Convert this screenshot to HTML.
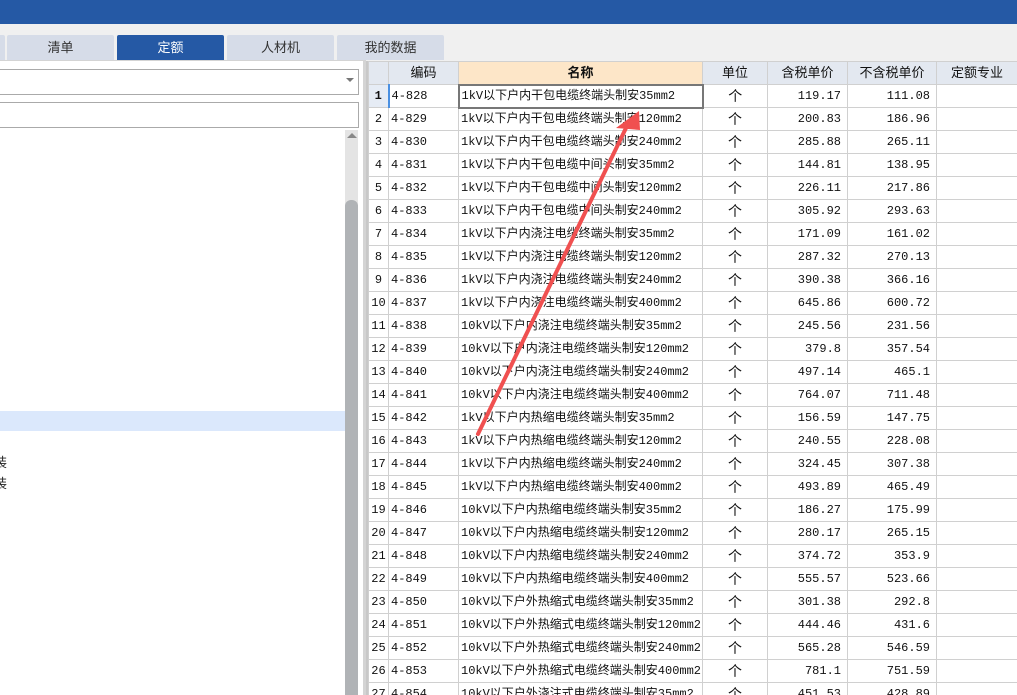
<!DOCTYPE html>
<html><head><meta charset="utf-8">
<style>
*{box-sizing:border-box;margin:0;padding:0}
body{width:1017px;height:695px;overflow:hidden;background:#f0f0f0;font-family:"Liberation Sans","Noto Sans CJK SC",sans-serif;position:relative}
.title{position:absolute;left:0;top:0;width:1017px;height:24px;background:#2559a5}
.tab{position:absolute;top:35px;height:25px;background:#d6dce8;color:#333;font-size:13px;text-align:center;line-height:25px;border-radius:2px 2px 0 0}
.tab.on{background:#2559a5;color:#fff}
.left{position:absolute;left:0;top:60px;width:366px;height:635px;background:#fff;border-right:3px solid #d4d4d4;border-top:1px solid #d4d4d4}
.box{position:absolute;left:-2px;width:361px;height:26px;border:1px solid #aaa;background:#fff}
.sb{position:absolute;left:345px;top:130px;width:13px;height:565px;background:#e4e4e4}
.thumb{position:absolute;left:345px;top:200px;width:13px;height:495px;background:#b0b3b6;border-radius:6px 6px 0 0}
.sel{position:absolute;left:0;top:411px;width:345px;height:20px;background:#dbe8fc}
.grid{position:absolute;left:366px;top:61px;width:651px;height:634px;background:#fff;border-left:2px solid #c8c8c8;overflow:hidden}
table{border-collapse:collapse;table-layout:fixed;width:649px;font-family:"Liberation Mono","Noto Sans CJK SC",monospace;font-size:12px;color:#111}
td,th{border:1px solid #d0d0d0;height:23px;padding:0 2px;white-space:nowrap;overflow:hidden;line-height:14px;vertical-align:middle}
th{background:#e3e8f0;font-weight:normal;font-family:"Liberation Sans","Noto Sans CJK SC",sans-serif;font-size:13px;height:23px}
th.n{background:#fde6c8;font-weight:bold}
td.r{text-align:right;padding-right:6px}
td.c{text-align:center;font-family:"Noto Sans CJK SC",sans-serif;font-size:14px}
td.i{text-align:center;padding:0}
</style></head><body>
<div class="title"></div>
<div class="tab" style="left:-2px;width:7px"></div>
<div class="tab" style="left:7px;width:107px">清单</div>
<div class="tab on" style="left:117px;width:107px">定额</div>
<div class="tab" style="left:227px;width:107px">人材机</div>
<div class="tab" style="left:337px;width:107px">我的数据</div>
<div class="left"></div>
<div class="box" style="top:69px"><span style="position:absolute;right:4px;top:8px;width:0;height:0;border-left:4px solid transparent;border-right:4px solid transparent;border-top:4px solid #777"></span></div>
<div class="box" style="top:102px"></div>
<div class="sel"></div>
<div style="position:absolute;left:-6px;top:452px;font-size:13px;color:#222">装</div>
<div style="position:absolute;left:-6px;top:473px;font-size:13px;color:#222">装</div>
<div class="sb"></div>
<div style="position:absolute;left:347px;top:133px;width:0;height:0;border-left:5px solid transparent;border-right:5px solid transparent;border-bottom:5px solid #888"></div>
<div class="thumb"></div>
<div class="grid">
<table>
<colgroup><col style="width:20px"><col style="width:70px"><col style="width:244px"><col style="width:65px"><col style="width:80px"><col style="width:89px"><col style="width:81px"></colgroup>
<tr><th></th><th>编码</th><th class="n">名称</th><th>单位</th><th>含税单价</th><th>不含税单价</th><th>定额专业</th></tr>
<tr><td class="i" style="background:#e6ecf5;font-weight:bold;border-right:2px solid #4a90e2">1</td><td>4-828</td><td style="border:2px solid #777">1kV以下户内干包电缆终端头制安35mm2</td><td class="c">个</td><td class="r">119.17</td><td class="r">111.08</td><td></td></tr>
<tr><td class="i">2</td><td>4-829</td><td>1kV以下户内干包电缆终端头制安120mm2</td><td class="c">个</td><td class="r">200.83</td><td class="r">186.96</td><td></td></tr>
<tr><td class="i">3</td><td>4-830</td><td>1kV以下户内干包电缆终端头制安240mm2</td><td class="c">个</td><td class="r">285.88</td><td class="r">265.11</td><td></td></tr>
<tr><td class="i">4</td><td>4-831</td><td>1kV以下户内干包电缆中间头制安35mm2</td><td class="c">个</td><td class="r">144.81</td><td class="r">138.95</td><td></td></tr>
<tr><td class="i">5</td><td>4-832</td><td>1kV以下户内干包电缆中间头制安120mm2</td><td class="c">个</td><td class="r">226.11</td><td class="r">217.86</td><td></td></tr>
<tr><td class="i">6</td><td>4-833</td><td>1kV以下户内干包电缆中间头制安240mm2</td><td class="c">个</td><td class="r">305.92</td><td class="r">293.63</td><td></td></tr>
<tr><td class="i">7</td><td>4-834</td><td>1kV以下户内浇注电缆终端头制安35mm2</td><td class="c">个</td><td class="r">171.09</td><td class="r">161.02</td><td></td></tr>
<tr><td class="i">8</td><td>4-835</td><td>1kV以下户内浇注电缆终端头制安120mm2</td><td class="c">个</td><td class="r">287.32</td><td class="r">270.13</td><td></td></tr>
<tr><td class="i">9</td><td>4-836</td><td>1kV以下户内浇注电缆终端头制安240mm2</td><td class="c">个</td><td class="r">390.38</td><td class="r">366.16</td><td></td></tr>
<tr><td class="i">10</td><td>4-837</td><td>1kV以下户内浇注电缆终端头制安400mm2</td><td class="c">个</td><td class="r">645.86</td><td class="r">600.72</td><td></td></tr>
<tr><td class="i">11</td><td>4-838</td><td>10kV以下户内浇注电缆终端头制安35mm2</td><td class="c">个</td><td class="r">245.56</td><td class="r">231.56</td><td></td></tr>
<tr><td class="i">12</td><td>4-839</td><td>10kV以下户内浇注电缆终端头制安120mm2</td><td class="c">个</td><td class="r">379.8</td><td class="r">357.54</td><td></td></tr>
<tr><td class="i">13</td><td>4-840</td><td>10kV以下户内浇注电缆终端头制安240mm2</td><td class="c">个</td><td class="r">497.14</td><td class="r">465.1</td><td></td></tr>
<tr><td class="i">14</td><td>4-841</td><td>10kV以下户内浇注电缆终端头制安400mm2</td><td class="c">个</td><td class="r">764.07</td><td class="r">711.48</td><td></td></tr>
<tr><td class="i">15</td><td>4-842</td><td>1kV以下户内热缩电缆终端头制安35mm2</td><td class="c">个</td><td class="r">156.59</td><td class="r">147.75</td><td></td></tr>
<tr><td class="i">16</td><td>4-843</td><td>1kV以下户内热缩电缆终端头制安120mm2</td><td class="c">个</td><td class="r">240.55</td><td class="r">228.08</td><td></td></tr>
<tr><td class="i">17</td><td>4-844</td><td>1kV以下户内热缩电缆终端头制安240mm2</td><td class="c">个</td><td class="r">324.45</td><td class="r">307.38</td><td></td></tr>
<tr><td class="i">18</td><td>4-845</td><td>1kV以下户内热缩电缆终端头制安400mm2</td><td class="c">个</td><td class="r">493.89</td><td class="r">465.49</td><td></td></tr>
<tr><td class="i">19</td><td>4-846</td><td>10kV以下户内热缩电缆终端头制安35mm2</td><td class="c">个</td><td class="r">186.27</td><td class="r">175.99</td><td></td></tr>
<tr><td class="i">20</td><td>4-847</td><td>10kV以下户内热缩电缆终端头制安120mm2</td><td class="c">个</td><td class="r">280.17</td><td class="r">265.15</td><td></td></tr>
<tr><td class="i">21</td><td>4-848</td><td>10kV以下户内热缩电缆终端头制安240mm2</td><td class="c">个</td><td class="r">374.72</td><td class="r">353.9</td><td></td></tr>
<tr><td class="i">22</td><td>4-849</td><td>10kV以下户内热缩电缆终端头制安400mm2</td><td class="c">个</td><td class="r">555.57</td><td class="r">523.66</td><td></td></tr>
<tr><td class="i">23</td><td>4-850</td><td>10kV以下户外热缩式电缆终端头制安35mm2</td><td class="c">个</td><td class="r">301.38</td><td class="r">292.8</td><td></td></tr>
<tr><td class="i">24</td><td>4-851</td><td>10kV以下户外热缩式电缆终端头制安120mm2</td><td class="c">个</td><td class="r">444.46</td><td class="r">431.6</td><td></td></tr>
<tr><td class="i">25</td><td>4-852</td><td>10kV以下户外热缩式电缆终端头制安240mm2</td><td class="c">个</td><td class="r">565.28</td><td class="r">546.59</td><td></td></tr>
<tr><td class="i">26</td><td>4-853</td><td>10kV以下户外热缩式电缆终端头制安400mm2</td><td class="c">个</td><td class="r">781.1</td><td class="r">751.59</td><td></td></tr>
<tr><td class="i">27</td><td>4-854</td><td>10kV以下户外浇注式电缆终端头制安35mm2</td><td class="c">个</td><td class="r">451.53</td><td class="r">428.89</td><td></td></tr>
</table>
</div>
<svg style="position:absolute;left:0;top:0" width="1017" height="695">
<line x1="478" y1="434" x2="626" y2="128" stroke="#f05050" stroke-width="4" stroke-linecap="round"/>
<polygon points="639,111 640,130 616,128" fill="#f05050"/>
</svg>
</body></html>
